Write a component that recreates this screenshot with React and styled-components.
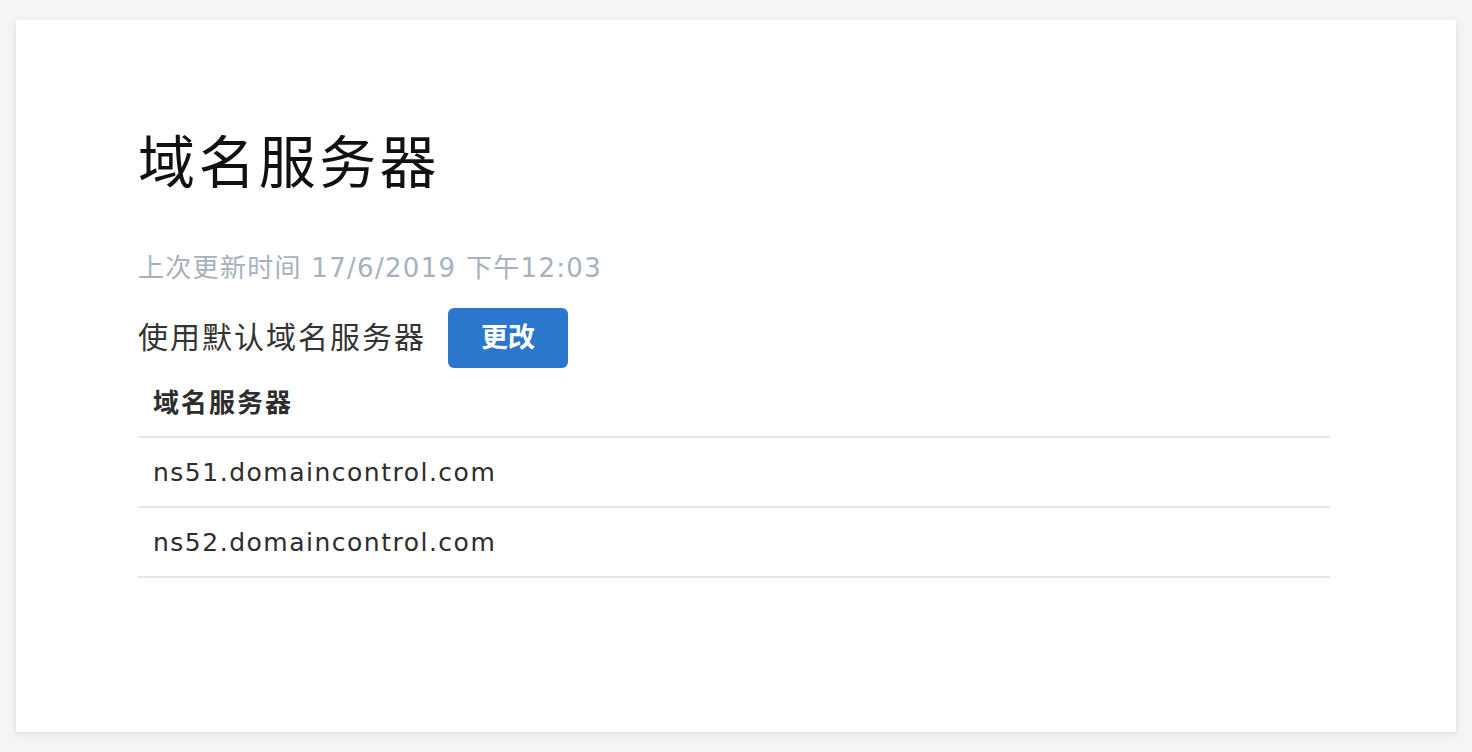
import React from 'react';
import styled, { createGlobalStyle } from 'styled-components';

const GlobalStyle = createGlobalStyle`
  html, body {
    margin: 0;
    padding: 0;
    background-color: #f4f5f7;
  }
  body {
    font-family: "DejaVu Sans", "Noto Sans CJK SC", sans-serif;
  }
`;

const Page = styled.div`
  padding: 20px 16px;
  min-height: 752px;
  box-sizing: border-box;
`;

const Card = styled.div`
  height: 712px;
  box-sizing: border-box;
  background-color: #fff;
  box-shadow: 0 2px 8px rgba(0, 0, 0, 0.1);
  padding: 105px 126px 0 122px;
`;

const Title = styled.h1`
  margin: 0;
  font-family: "Noto Sans CJK SC", sans-serif;
  font-size: 57px;
  line-height: 67px;
  font-weight: 400;
  color: #111;
  letter-spacing: 3.4px;
`;

const Updated = styled.div`
  margin-top: 58px;
  font-size: 26px;
  line-height: 36px;
  color: #a7b1bd;
  letter-spacing: 1.3px;
`;

const DefaultRow = styled.div`
  display: flex;
  align-items: center;
  gap: 22px;
  margin-top: 22px;
`;

const Label = styled.span`
  font-family: "Noto Sans CJK SC", sans-serif;
  font-size: 30px;
  color: #333;
  letter-spacing: 2px;
  padding-bottom: 6px;
`;

const Button = styled.button`
  width: 120px;
  height: 60px;
  border: none;
  border-radius: 6px;
  background-color: #2a77cc;
  color: #fff;
  font-family: "Noto Sans CJK SC", sans-serif;
  font-size: 27px;
  font-weight: 700;
  padding: 0 0 6px;
  cursor: pointer;
`;

const Table = styled.div`
  display: flex;
  flex-direction: column;
`;

const Row = styled.div`
  height: 70px;
  display: flex;
  align-items: center;
  padding-left: 15px;
  border-bottom: 2px solid #e6e6e6;
  font-family: ${(p) => (p.$head ? '"Noto Sans CJK SC", sans-serif' : 'inherit')};
  font-size: ${(p) => (p.$head ? '26px' : '25px')};
  font-weight: ${(p) => (p.$head ? 700 : 400)};
  letter-spacing: ${(p) => (p.$head ? '2px' : '1.5px')};
  padding-bottom: ${(p) => (p.$head ? '4px' : '0')};
  box-sizing: border-box;
  color: #2d2d2d;
`;

const servers = ['ns51.domaincontrol.com', 'ns52.domaincontrol.com'];

const App = () => {
  return (
    <Page>
      <GlobalStyle />
      <Card>
        <Title>域名服务器</Title>
        <Updated>上次更新时间 17/6/2019 下午12:03</Updated>
        <DefaultRow>
          <Label>使用默认域名服务器</Label>
          <Button>更改</Button>
        </DefaultRow>
        <Table>
          <Row $head>域名服务器</Row>
          {servers.map((s) => (
            <Row key={s}>{s}</Row>
          ))}
        </Table>
      </Card>
    </Page>
  );
};

export default App;
